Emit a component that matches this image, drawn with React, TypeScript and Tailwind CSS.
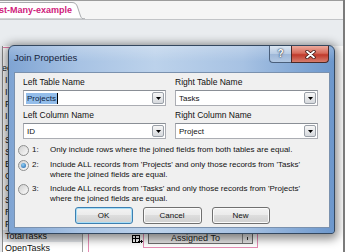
import React from "react";

function Combo({ value, selected }: { value: string; selected?: boolean }) {
  return (
    <div className="h-[16px] bg-white border border-[#abadb3] border-t-[#8a8f96] flex items-center pl-[2px]">
      {selected ? (
        <span className="flex items-center">
          <span className="bg-[#93bdea] text-[#0c2442] px-[1px] leading-[11px]">{value}</span>
          <span className="w-px h-[11px] bg-black" />
        </span>
      ) : (
        <span className="pl-[1px] leading-[11px]">{value}</span>
      )}
      <div className="ml-auto mr-[1px] w-[12px] h-[12px] border border-[#9aa0a8] rounded-[2px] bg-gradient-to-b from-[#f7f7f7] to-[#d6d9dd] flex items-center justify-center">
        <svg width="5" height="3" viewBox="0 0 5 3">
          <path d="M0 0H5L2.5 3Z" fill="#000" />
        </svg>
      </div>
    </div>
  );
}

function Radio({ checked }: { checked?: boolean }) {
  return (
    <div className="w-[11px] h-[11px] shrink-0 rounded-full border border-[#8e8f8f] bg-gradient-to-br from-[#d0d0d0] to-[#fbfbfb] flex items-center justify-center">
      {checked && (
        <div className="w-[5px] h-[5px] rounded-full bg-[radial-gradient(circle_at_40%_35%,#8fd0f6,#1b5da6)]" />
      )}
    </div>
  );
}

function RadioRow({ n, lines, checked }: { n: string; lines: string[]; checked?: boolean }) {
  return (
    <div className="flex items-start">
      <Radio checked={checked} />
      <div className="ml-[3px] w-[18px] shrink-0 h-[10px] flex">
        <span className="leading-[10px]">{n}</span>
      </div>
      <div className="flex flex-col">
        {lines.map((l) => (
          <div key={l} className="leading-[10px] whitespace-nowrap">
            {l}
          </div>
        ))}
      </div>
    </div>
  );
}

function Btn({ label, focused, w }: { label: string; focused?: boolean; w: string }) {
  return (
    <div
      className={
        (focused
          ? "border-[#3c7fb1] shadow-[inset_0_0_0_1px_#a8def7] "
          : "border-[#707070] shadow-[inset_0_0_0_1px_#fbfbfb] ") +
        w +
        " h-[17px] rounded-[3px] border bg-[linear-gradient(#f3f3f3_0%,#ebebeb_45%,#dddddd_50%,#d0d0d0_100%)] flex items-center justify-center leading-[10px]"
      }
    >
      {label}
    </div>
  );
}

const navItems = ["", "ec", "I", "I", "F", "I", "F", "S", "S", "E", "C", "C", "S", "R", "P"];

export default function App() {
  return (
    <div className="relative w-[345px] h-[252px] overflow-hidden flex flex-col bg-white border-r-2 border-[#7b7b7b] font-['Liberation_Sans',Arial,sans-serif] text-[#111]">
      {/* tab strip */}
      <div className="h-[20px] shrink-0 bg-[#f5f5f5] border-t border-b border-t-[#9c9c9c] border-b-[#c2c4c7] flex items-end">
        <div className="relative w-[86px] h-[18px]">
          <svg className="absolute inset-0" width="86" height="18" viewBox="0 0 86 18">
            <path
              d="M-1 18 L-1 1.5 L72 1.5 C75 1.5 76.5 3 77.5 6 L80.5 15 C81.3 17.2 82.5 18 85 18 Z"
              fill="#ffffff"
              stroke="#a9abae"
              strokeWidth="1"
            />
          </svg>
          <div className="relative -ml-[1px] pt-[4px] text-[9px] leading-[11px] font-bold text-[#d0217c] whitespace-nowrap">
            st-Many-example
          </div>
        </div>
      </div>
      {/* gray band */}
      <div className="h-[26px] shrink-0 bg-[#e9ecef]" />
      {/* lower */}
      <div className="flex-1 flex bg-[#e6e8eb]">
        <div className="ml-[2px] w-[81px] border-l border-r border-l-[#8a8a8a] border-r-[#a4a4a4] bg-white flex flex-col pt-[1px] overflow-hidden">
          <div className="h-px bg-[#e47fab]" />
          <div className="mt-[2px] flex flex-col text-[9px]">
            {navItems.map((t, i) => (
              <div
                key={i}
                className={
                  (t === "ec" ? "-ml-[1px] " : "pl-[2px] ") + "h-[12px] leading-[12px] whitespace-nowrap"
                }
              >
                {t}
              </div>
            ))}
            <div className="h-[12px] leading-[12px] pl-[2px] bg-[#e2e5e9] whitespace-nowrap">TotalTasks</div>
            <div className="h-[12px] leading-[12px] pl-[2px] whitespace-nowrap">OpenTasks</div>
          </div>
        </div>
        <div className="relative flex-1 bg-white">
          <div className="absolute left-[5px] top-[182px] w-px h-[30px] bg-[#e58bb3]" />
          <svg className="absolute left-[49px] top-[188px]" width="11" height="11" viewBox="0 0 11 11">
            <rect x="0.5" y="1.5" width="7" height="7" fill="none" stroke="#000" />
            <path d="M0.5 4.5H7.5M3.5 1.5V8.5" stroke="#000" />
            <path d="M6 7.5H10.5M9 6L10.5 7.5L9 9" stroke="#000" fill="none" />
          </svg>
          <div className="absolute left-[60px] top-[176px] w-[115px] h-[26px] border border-[#e58bb3]">
            <div className="absolute left-[4px] top-[9px] w-[105px] h-[12px] border border-[#6f6f6f] bg-[#e6e6e6] flex items-center text-[9px] leading-[10px]">
              <span className="flex-1 text-center text-[#222]">Assigned To</span>
              <span className="w-[10px] h-full border-l border-[#8a8a8a] flex items-center justify-center">
                <span className="w-px h-[3px] bg-[#333]" />
              </span>
            </div>
          </div>
        </div>
      </div>

      {/* dialog */}
      <div className="absolute left-[8px] top-[45px] w-[327px] h-[189px] flex flex-col border border-[#34485f] rounded-t-[6px] rounded-b-[3px] shadow-[0_2px_10px_3px_rgba(0,0,0,0.45)] bg-[linear-gradient(90deg,#7fa4d3_0%,#a8c3e4_22%,#bcd2eb_45%,#a7c2e3_72%,#6c97cc_100%)] text-[8px]">
        {/* title bar */}
        <div className="h-[26px] shrink-0 flex items-start pl-[5px] pr-[5px] bg-[linear-gradient(180deg,rgba(255,255,255,0.25),rgba(255,255,255,0)_60%)] rounded-t-[6px]">
          <div className="pt-[6px] text-[9.5px] leading-[12px] text-[#15233a] whitespace-nowrap">Join Properties</div>
          <div className="ml-auto flex">
            <div className="w-[22px] h-[17px] border-l border-b border-[#4a5f7b] rounded-bl-[4px] bg-[linear-gradient(180deg,#dbe6f2_0%,#b8cce4_48%,#9fb8d8_52%,#b2c8e3_100%)] flex items-center justify-center">
              <span className="text-[10px] leading-[10px] font-bold text-white [text-shadow:0_0_2px_#1c2c44,0_0_1px_#1c2c44]">?</span>
            </div>
            <div className="w-[38px] h-[17px] border-l border-r border-b border-[#4a2a28] rounded-br-[4px] bg-[linear-gradient(180deg,#ecaa9d_0%,#d66a5a_45%,#c0392b_55%,#d77e6e_100%)] flex items-center justify-center">
              <svg width="11" height="9" viewBox="0 0 11 9">
                <path d="M2 1.5L9 7.5M9 1.5L2 7.5" stroke="#3a1410" strokeWidth="3.4" strokeLinecap="round" />
                <path d="M2 1.5L9 7.5M9 1.5L2 7.5" stroke="#ffffff" strokeWidth="1.8" strokeLinecap="round" />
              </svg>
            </div>
          </div>
        </div>
        {/* client */}
        <div className="ml-[5px] mr-[4px] mb-[5px] flex-1 bg-[#f0f0f0] border border-[#7a91ae] flex flex-col pt-[4px] text-[#111]">
          <div className="grid grid-cols-[143px_143px] gap-x-[9px] pl-[8px]">
            <div className="leading-[11px] h-[11px] text-[8.5px]">Left Table Name</div>
            <div className="leading-[11px] h-[11px] text-[8.5px]">Right Table Name</div>
            <div className="mt-[2px]">
              <Combo value="Projects" selected />
            </div>
            <div className="mt-[2px]">
              <Combo value="Tasks" />
            </div>
            <div className="mt-[4px] leading-[11px] h-[11px] text-[8.5px]">Left Column Name</div>
            <div className="mt-[4px] leading-[11px] h-[11px] text-[8.5px]">Right Column Name</div>
            <div className="mt-[2px]">
              <Combo value="ID" />
            </div>
            <div className="mt-[2px]">
              <Combo value="Project" />
            </div>
          </div>
          <div className="mt-[6px] pl-[3px] flex flex-col gap-[4px]">
            <RadioRow n="1:" lines={["Only include rows where the joined fields from both tables are equal."]} />
            <RadioRow
              n="2:"
              checked
              lines={[
                "Include ALL records from 'Projects' and only those records from 'Tasks'",
                "where the joined fields are equal.",
              ]}
            />
            <RadioRow
              n="3:"
              lines={[
                "Include ALL records from 'Tasks' and only those records from 'Projects'",
                "where the joined fields are equal.",
              ]}
            />
          </div>
          <div className="mt-[3px] flex justify-center gap-[10px]">
            <Btn label="OK" focused w="w-[58px]" />
            <Btn label="Cancel" w="w-[59px]" />
            <Btn label="New" w="w-[58px]" />
          </div>
        </div>
      </div>
    </div>
  );
}
